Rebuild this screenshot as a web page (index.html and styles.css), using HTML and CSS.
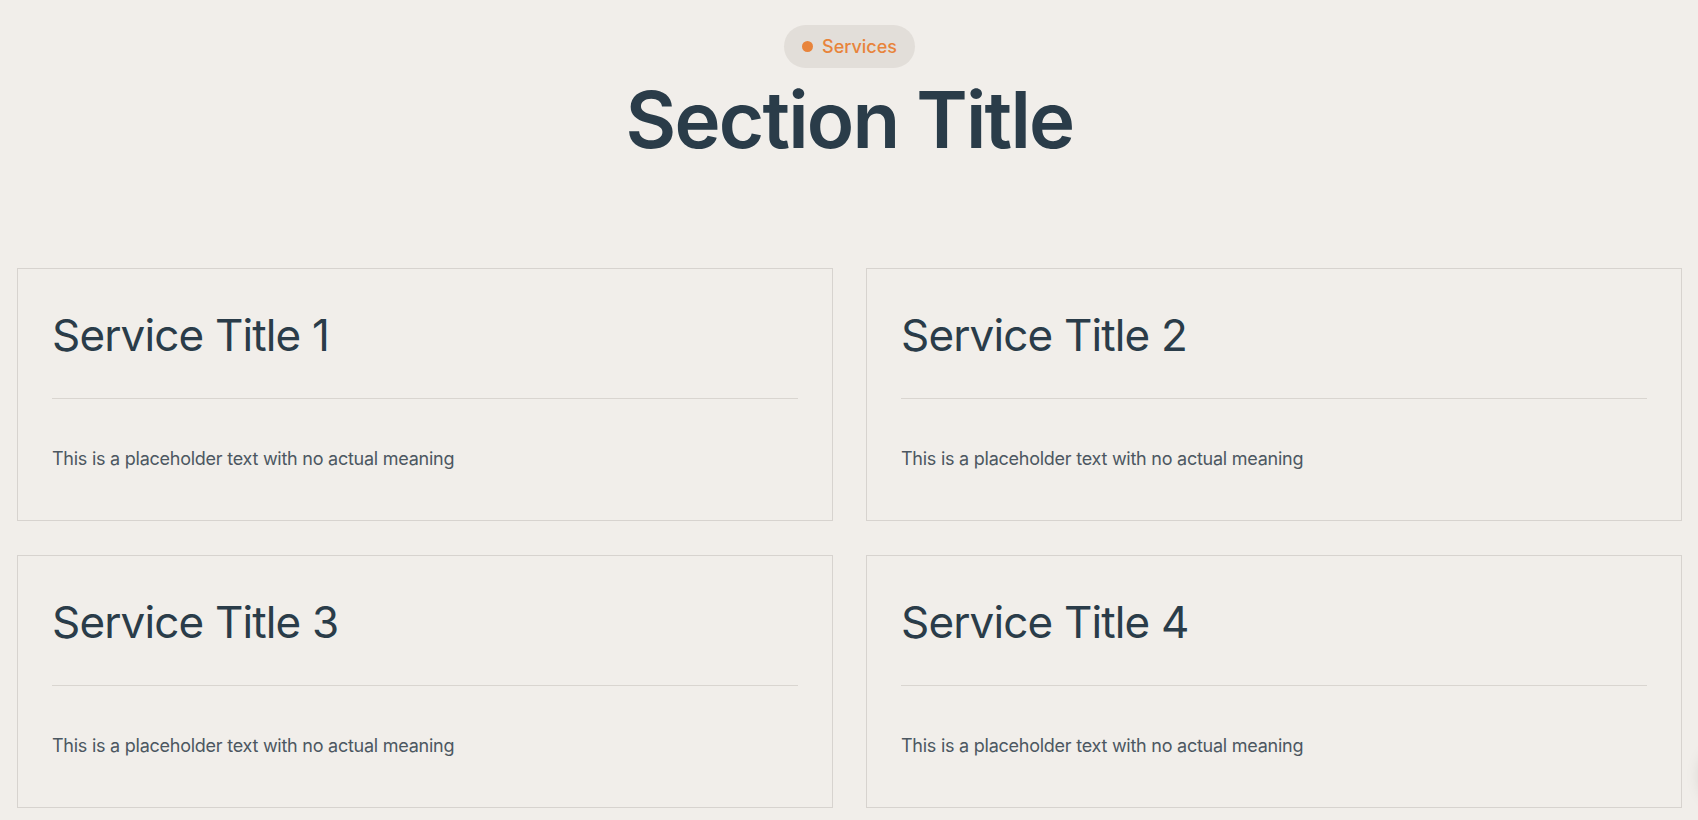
FILE: index.html
```html
<!DOCTYPE html>
<html lang="en">
<head>
<meta charset="utf-8">
<title>Services</title>
<link rel="stylesheet" href="styles.css">
</head>
<body>
<section class="services">
  <header class="services-head">
    <span class="badge"><span class="badge-dot"></span>Services</span>
    <h1 class="section-title">Section Title</h1>
  </header>
  <div class="grid">
    <article class="card">
      <h2 class="card-title">Service Title 1</h2>
      <hr class="card-rule">
      <p class="card-text">This is a placeholder text with no actual meaning</p>
    </article>
    <article class="card">
      <h2 class="card-title">Service Title 2</h2>
      <hr class="card-rule">
      <p class="card-text">This is a placeholder text with no actual meaning</p>
    </article>
    <article class="card">
      <h2 class="card-title">Service Title 3</h2>
      <hr class="card-rule">
      <p class="card-text">This is a placeholder text with no actual meaning</p>
    </article>
    <article class="card">
      <h2 class="card-title">Service Title 4</h2>
      <hr class="card-rule">
      <p class="card-text">This is a placeholder text with no actual meaning</p>
    </article>
  </div>
</section>
<div class="float-btn"></div>
</body>
</html>
```
FILE: styles.css
```css
html, body {
  margin: 0;
  padding: 0;
  background: #f1eeea;
  font-family: Inter, "Noto Sans", sans-serif;
  overflow: hidden;
}

.services {
  padding: 25px 16px 0 17px;
}

.services-head {
  display: flex;
  flex-direction: column;
  align-items: center;
}

.badge {
  display: inline-flex;
  align-items: center;
  gap: 9px;
  height: 43px;
  padding: 0 18px;
  box-sizing: border-box;
  border-radius: 22px;
  background: #e2ded9;
  color: #e8843b;
  font-size: 18px;
  font-weight: 500;
}

.badge-dot {
  width: 11px;
  height: 11px;
  border-radius: 50%;
  background: #e8843b;
}

.section-title {
  margin: 8px 0 0;
  font-size: 78px;
  line-height: 88px;
  font-weight: 600;
  color: #2a3c49;
  letter-spacing: -1.8px;
}

.grid {
  display: grid;
  grid-template-columns: 1fr 1fr;
  column-gap: 33px;
  row-gap: 34px;
  margin-top: 104px;
}

.card {
  border: 1px solid #d7d3cf;
  padding: 40px 34px 48px;
}

.card-title {
  margin: 0;
  font-size: 44px;
  line-height: 53px;
  font-weight: 400;
  color: #2a3c49;
  letter-spacing: -0.85px;
}

.card-rule {
  margin: 36px 0 0;
  border: 0;
  border-top: 1px solid #d9d5d0;
  height: 0;
}

.card-text {
  margin: 46px 0 0;
  font-size: 18px;
  line-height: 27px;
  color: #4c5761;
  letter-spacing: -0.25px;
}

.float-btn {
  position: fixed;
  right: -62px;
  bottom: 20px;
  width: 56px;
  height: 56px;
  border-radius: 50%;
  background: #f1eeea;
  box-shadow: 0 4px 18px rgba(0, 0, 0, 0.22);
}
```
